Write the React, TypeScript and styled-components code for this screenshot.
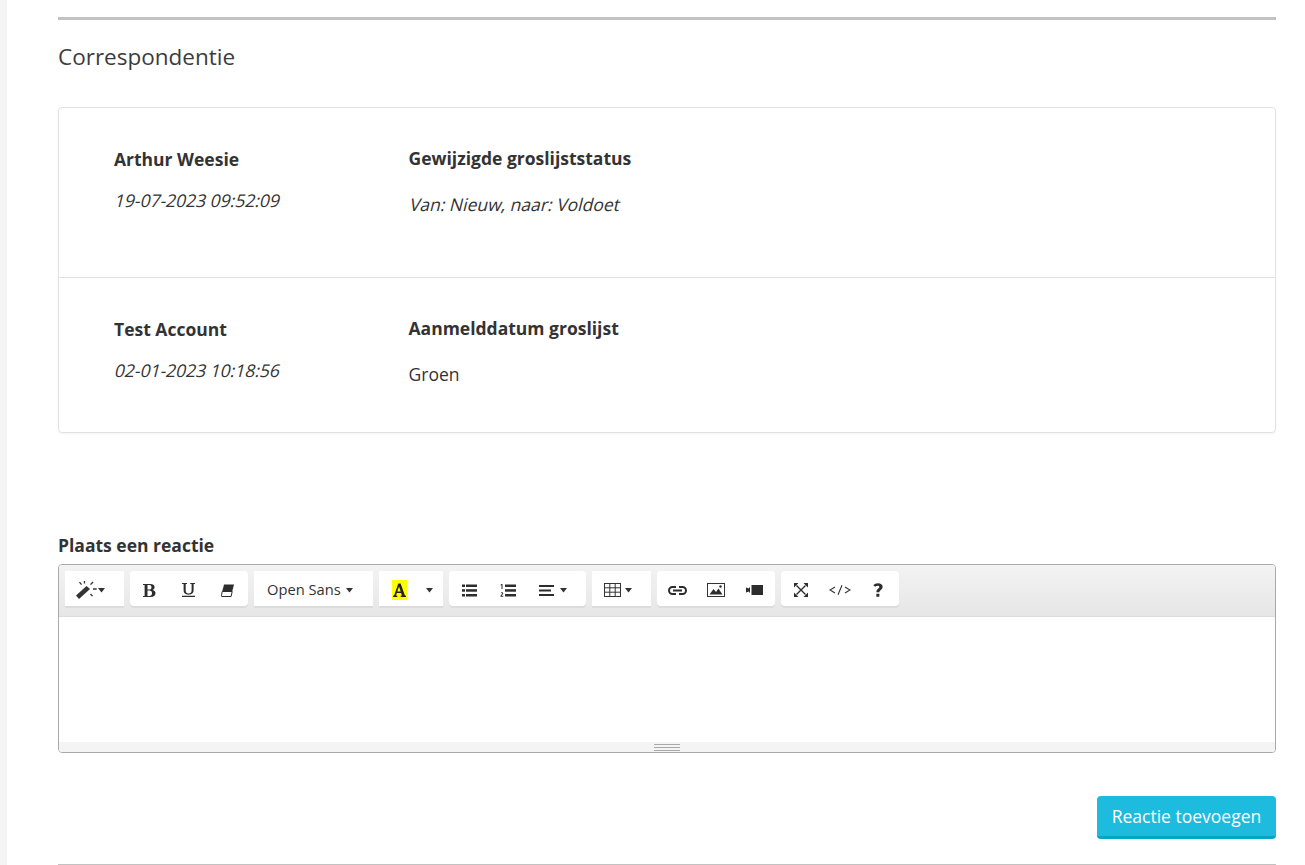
import React from "react";
import styled, { createGlobalStyle } from "styled-components";

const Global = createGlobalStyle`
  html, body { margin: 0; padding: 0; background: #fff; }
  body { font-family: "Open Sans", "Liberation Sans", sans-serif; color: #333; overflow: hidden; }
`;

const Page = styled.div`
  height: 865px;
  box-sizing: border-box;
  border-left: 7px solid #f4f4f4;
  padding: 17px 29px 0 51px;
  overflow: hidden;
`;
const TopRule = styled.div`
  height: 3px;
  background: #c2c2c2;
`;
const Heading = styled.h2`
  margin: 20px 0 0;
  font-size: 22.5px;
  line-height: 34px;
  font-weight: 400;
  color: #3c3c3c;
`;
const Card = styled.section`
  margin-top: 33px;
  border: 1px solid #e2e2e2;
  border-radius: 4px;
  box-shadow: 0 1px 2px rgba(0, 0, 0, 0.05);
`;
const Row = styled.div<{ $h: number; $line?: boolean }>`
  display: flex;
  box-sizing: border-box;
  height: ${(p) => p.$h}px;
  padding: 39px 0 0 55px;
  border-bottom: ${(p) => (p.$line ? "1px solid #e2e2e2" : "none")};
`;
const Meta = styled.div`
  width: 294.5px;
  flex: none;
`;
const Name = styled.div`
  font-size: 17.5px;
  line-height: 24px;
  font-weight: 700;
  color: #333;
`;
const Slanted = styled.span`
  display: inline-block;
  font-size: 17.5px;
  line-height: 24px;
  transform: skewX(-14deg);
  transform-origin: 0 75%;
  color: #333;
`;
const DateText = styled.div`
  margin-top: 17px;
  height: 24px;
`;
const Subject = styled.div`
  font-size: 17.5px;
  line-height: 22px;
  font-weight: 700;
  color: #333;
`;
const Message = styled.div`
  margin-top: 23px;
  font-size: 17.5px;
  line-height: 24px;
  color: #333;
`;
const Label = styled.label`
  display: block;
  margin-top: 100px;
  font-size: 17.5px;
  line-height: 24px;
  font-weight: 700;
  color: #333;
`;
const Editor = styled.div`
  margin-top: 7px;
  height: 189px;
  box-sizing: border-box;
  border: 1px solid #a9a9a9;
  border-radius: 4px;
  display: flex;
  flex-direction: column;
  overflow: hidden;
`;
const Toolbar = styled.div`
  height: 52px;
  flex: none;
  box-sizing: border-box;
  padding: 6px 0 0 6px;
  display: flex;
  gap: 6px;
  align-items: flex-start;
  background: linear-gradient(#f3f3f3, #e6e6e6);
  border-bottom: 1px solid #dcdcdc;
`;
const Group = styled.div<{ $w: number; $round?: boolean }>`
  width: ${(p) => p.$w}px;
  height: 35px;
  box-sizing: border-box;
  padding-top: 3px;
  display: flex;
  align-items: center;
  background: #fff;
  border-radius: ${(p) => (p.$round ? 4 : 0)}px;
  box-shadow: 0 2px 0 #dcdcdc;
`;
const Tool = styled.span<{ $l: number; $gap?: number }>`
  margin-left: ${(p) => p.$l}px;
  flex: none;
  display: flex;
  align-items: center;
  gap: ${(p) => p.$gap ?? 3}px;
`;
const FontLabel = styled.span`
  font-size: 14.7px;
  line-height: 20px;
  margin-top: -2px;
  color: #333;
`;
const Body = styled.div`
  flex: 1;
  background: #fff;
`;
const Resize = styled.div`
  height: 10px;
  flex: none;
  background: #f4f4f4;
  display: flex;
  align-items: center;
  justify-content: center;
`;
const Actions = styled.div`
  display: flex;
  justify-content: flex-end;
  margin-top: 43px;
`;
const Button = styled.button`
  width: 179px;
  height: 43px;
  padding: 0;
  border: 0;
  border-bottom: 3px solid #03a5c5;
  border-radius: 4px;
  background: #1dbbde;
  color: #fff;
  font-family: inherit;
  font-size: 17.5px;
`;
const BottomRule = styled.div`
  margin-top: 25px;
  height: 1px;
  background: #c2c2c2;
`;

const Caret = () => (
  <svg width="7" height="5" viewBox="0 0 7 5"><path d="M0 0h7L3.500 4.500z" fill="#333" /></svg>
);
const Magic = () => (
  <svg width="21" height="18" viewBox="0 0 21 18" fill="#333">
    <path d="M0 14.500 10.500 5l3.500 3L3 18z" />
    <path d="M3 1.500l1-.8 2 2.500-1 .8zM7.800 0h1.300v2.600H7.800zM14 3.300l2.500-2.700 1 .8-2.500 2.700zM17 7.300h3.700v1.400H17zM14 13.500l1-.9 2 2.100-1 .9z" />
  </svg>
);
const Bold = () => (
  <svg width="13" height="15" viewBox="0 0 13 14" fill="#2d2d2d">
    <path fillRule="evenodd" d="M0 .5h7c3 0 4.600 1.200 4.600 3.200 0 1.500-1 2.400-2.400 2.800 2 .3 3.300 1.400 3.300 3.200 0 2.300-1.900 3.800-4.900 3.800H0v-1h1.600V1.500H0zM4.500 1.500v4.500h1.600c1.600 0 2.400-.7 2.400-2.300 0-1.400-.8-2.200-2.300-2.200zm0 5.600v5.400h2c1.600 0 2.500-1 2.500-2.700 0-1.800-1-2.700-2.800-2.700z" />
  </svg>
);
const Under = () => (
  <svg width="13" height="14" viewBox="0 0 13 14" fill="#2d2d2d">
    <path d="M0 0h5v1H3.700v6.500c0 2 1 3 2.900 3s3-1.100 3-3V1H8.300V0H13v1h-1.400v6.600c0 2.800-1.800 4.100-5 4.100-3.400 0-5-1.400-5-4.100V1H0zM0 12.800h13V14H0z" />
  </svg>
);
const Eraser = () => (
  <svg width="13" height="13" viewBox="0 0 13 13">
    <path d="M3 .5h10l-1.800 7H1.200z" fill="#2d2d2d" />
    <path d="M1.200 7.500h10l-1.100 5H1a.6.6 0 0 1-.6-.7z" fill="#fff" stroke="#2d2d2d" strokeWidth="1" />
  </svg>
);
const Highlight = () => (
  <svg width="15" height="20" viewBox="0 0 15 20">
    <rect width="15" height="20" fill="#ffff00" />
    <path fillRule="evenodd" d="M6.300 3.500h2.300l4.300 12 1.100.3v1.200H8.700v-1.200l1.200-.3-.8-2.600H4.800l-.8 2.600 1.300.3V17H1v-1.200l1.100-.3zM7 6.500l-1.700 5h3.400z" fill="#222" />
  </svg>
);
const Bullets = () => (
  <svg width="17" height="13" viewBox="0 0 17 13" fill="#2d2d2d">
    <rect x="1" y="0.500" width="3" height="2.500" /><rect x="1" y="5.200" width="3" height="2.500" /><rect x="1" y="10" width="3" height="2.500" />
    <rect x="5" y="0.500" width="11" height="2.500" /><rect x="5" y="5.200" width="11" height="2.500" /><rect x="5" y="10" width="11" height="2.500" />
  </svg>
);
const Numbers = () => (
  <svg width="16" height="13" viewBox="0 0 16 13" fill="#2d2d2d">
    <path d="M1.500 0h1v5h-1V1.200l-.9.4V.7zM.6 9.200c.2-.7.7-1 1.300-1 .8 0 1.300.4 1.300 1.100 0 1-1.100 1.500-1.500 2.400h1.600v1H.5v-.9c.4-1 1.700-1.700 1.700-2.400 0-.5-.7-.4-.8.1z" />
    <rect x="5" y="0.500" width="11" height="2.500" /><rect x="5" y="5.200" width="11" height="2.500" /><rect x="5" y="10" width="11" height="2.500" />
  </svg>
);
const Align = () => (
  <svg width="15" height="11" viewBox="0 0 15 11" fill="#2d2d2d">
    <rect y="0" width="15" height="2" /><rect y="4.500" width="12" height="2" /><rect y="9" width="15" height="2" />
  </svg>
);
const TableIcon = () => (
  <svg width="17" height="14" viewBox="0 0 17 14" fill="none" stroke="#333" strokeWidth="1">
    <rect x=".5" y=".5" width="16" height="13" />
    <path d="M.5 4.800h16M.5 9.200h16M5.800.5v13M11.200.5v13" />
  </svg>
);
const LinkIcon = () => (
  <svg width="19" height="9" viewBox="0 0 19 9" fill="none" stroke="#2d2d2d" strokeWidth="2">
    <path d="M8 1H4.500a3.500 3.500 0 0 0 0 7H8M11 1h3.500a3.500 3.500 0 0 1 0 7H11M5 4.500h9" />
  </svg>
);
const Picture = () => (
  <svg width="18" height="14" viewBox="0 0 18 14">
    <rect x=".5" y=".5" width="17" height="13" fill="#fff" stroke="#333" />
    <path d="M2.500 11.500 6.500 6l2.500 3 2.500-3.500 4 6z" fill="#2d2d2d" />
    <circle cx="13.500" cy="3.500" r="1.200" fill="#2d2d2d" />
  </svg>
);
const Video = () => (
  <svg width="17" height="10" viewBox="0 0 17 10" fill="#2d2d2d">
    <path d="M0 2.500 3 3.500v3L0 7.500z" /><rect x="3" y="2.500" width="1" height="5" /><rect x="5.500" y="0" width="11.500" height="10" />
  </svg>
);
const Full = () => (
  <svg width="14" height="14" viewBox="0 0 14 14">
    <path d="M2.500 2.500l9 9M11.500 2.500l-9 9" stroke="#2d2d2d" strokeWidth="1.400" />
    <path d="M0 0h4.500L0 4.500zM14 0v4.500L9.500 0zM0 14V9.500L4.500 14zM14 14H9.500L14 9.500z" fill="#2d2d2d" />
  </svg>
);
const Code = () => (
  <svg width="22" height="10" viewBox="0 0 22 10" fill="none" stroke="#333" strokeWidth="1.100">
    <path d="M6 2 1 5l5 3M16 2l5 3-5 3M13 .2 9 9.800" />
  </svg>
);
const Help = () => (
  <svg width="10" height="14" viewBox="0 0 11 15" fill="#2d2d2d">
    <path d="M.3 2.300C1.500.8 3.200 0 5.400 0c3 0 5.200 1.500 5.200 4 0 2-1.200 2.900-2.300 3.700-.9.700-1.300 1.100-1.300 2.300H3.800c-.1-2 .6-2.900 1.700-3.800.9-.7 1.500-1.200 1.500-2 0-.9-.7-1.500-1.800-1.500-1.100 0-2 .5-2.700 1.300zM3.700 11.700h3.300V15H3.700z" />
  </svg>
);
const Grip = () => (
  <svg width="26" height="7" viewBox="0 0 26 7" fill="#a9a9a9">
    <rect width="26" height="1" /><rect y="3" width="26" height="1" /><rect y="6" width="26" height="1" />
  </svg>
);

export default function App() {
  return (
    <Page>
      <Global />
      <TopRule />
      <Heading>Correspondentie</Heading>
      <Card>
        <Row $h={170} $line>
          <Meta>
            <Name>Arthur Weesie</Name>
            <DateText><Slanted>19-07-2023 09:52:09</Slanted></DateText>
          </Meta>
          <div>
            <Subject>Gewijzigde groslijststatus</Subject>
            <Message><Slanted>Van: Nieuw, naar: Voldoet</Slanted></Message>
          </div>
        </Row>
        <Row $h={154}>
          <Meta>
            <Name>Test Account</Name>
            <DateText><Slanted>02-01-2023 10:18:56</Slanted></DateText>
          </Meta>
          <div>
            <Subject>Aanmelddatum groslijst</Subject>
            <Message>Groen</Message>
          </div>
        </Row>
      </Card>
      <Label>Plaats een reactie</Label>
      <Editor>
        <Toolbar>
          <Group $w={59}><Tool $l={11} $gap={1}><Magic /><Caret /></Tool></Group>
          <Group $w={118} $round>
            <Tool $l={13}><Bold /></Tool>
            <Tool $l={26}><Under /></Tool>
            <Tool $l={26}><Eraser /></Tool>
          </Group>
          <Group $w={119}><Tool $l={13} $gap={5}><FontLabel>Open Sans</FontLabel><Caret /></Tool></Group>
          <Group $w={64}>
            <Tool $l={13}><Highlight /></Tool>
            <Tool $l={19}><Caret /></Tool>
          </Group>
          <Group $w={137} $round>
            <Tool $l={12}><Bullets /></Tool>
            <Tool $l={22}><Numbers /></Tool>
            <Tool $l={23} $gap={6}><Align /><Caret /></Tool>
          </Group>
          <Group $w={59}><Tool $l={12} $gap={4}><TableIcon /><Caret /></Tool></Group>
          <Group $w={118} $round>
            <Tool $l={11}><LinkIcon /></Tool>
            <Tool $l={20}><Picture /></Tool>
            <Tool $l={21}><Video /></Tool>
          </Group>
          <Group $w={118} $round>
            <Tool $l={13}><Full /></Tool>
            <Tool $l={21}><Code /></Tool>
            <Tool $l={22}><Help /></Tool>
          </Group>
        </Toolbar>
        <Body />
        <Resize><Grip /></Resize>
      </Editor>
      <Actions><Button>Reactie toevoegen</Button></Actions>
      <BottomRule />
    </Page>
  );
}
